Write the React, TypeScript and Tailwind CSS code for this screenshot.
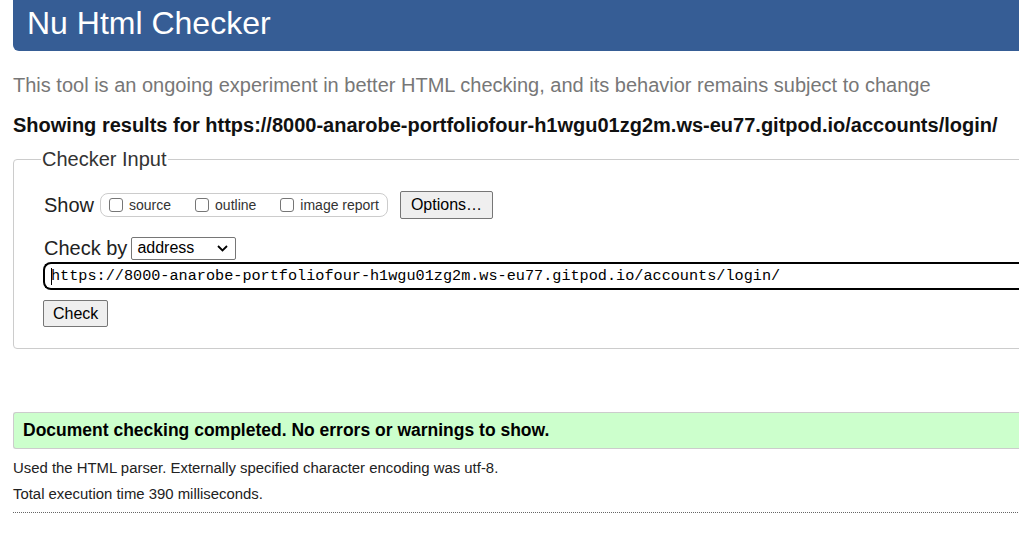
import React from "react";

const url = "https://8000-anarobe-portfoliofour-h1wgu01zg2m.ws-eu77.gitpod.io/accounts/login/";

const Box = ({ label }: { label: string }) => (
    <label className="flex items-center gap-[6px]">
        <span className="inline-block h-[14px] w-[14px] rounded-[3px] border border-[#767676] bg-white" />
        <span className="text-[14px] text-[#333]">{label}</span>
    </label>
);

const App: React.FC = () => {
    return (
        <div className="h-[550px] w-full overflow-hidden bg-white font-['Liberation_Sans',Arial,sans-serif] text-[#222]">
            <div className="w-[1080px] pl-[13px]">
                {/* Title bar */}
                <header className="flex h-[51px] items-end rounded-bl-[6px] bg-[#365d95] pb-[12px] pl-[14px]">
                    <h1 className="text-[32px] leading-none text-white">Nu Html Checker</h1>
                </header>

                <p className="mt-[22px] text-[20px] leading-[24px] text-[#777]">
                    This tool is an ongoing experiment in better HTML checking, and its behavior remains subject to change
                </p>
                <p className="mt-[16px] text-[20px] font-bold leading-[24px] text-[#111]">
                    Showing results for {url}
                </p>

                {/* Checker input */}
                <fieldset className="mt-[11px] rounded-[4px] border border-[#ccc] pb-[21px] pl-[30px]">
                    <legend className="-ml-[3px] px-[1px] text-[20px] leading-[22px] text-[#333]">Checker Input</legend>
                    <div className="mt-[21px] flex h-[28px] items-center">
                        <span className="text-[20px] text-[#222]">Show</span>
                        <div className="ml-[6px] flex h-[24px] items-center gap-[24px] rounded-[8px] border border-[#ccc] pl-[8px] pr-[8px]">
                            <Box label="source" />
                            <Box label="outline" />
                            <Box label="image report" />
                        </div>
                        <button className="ml-[12px] h-[28px] rounded-[2px] border border-[#767676] bg-[#efefef] px-[10px] text-[16px] text-black">
                            Options…
                        </button>
                    </div>
                    <div className="mt-[17px] flex h-[24px] items-center">
                        <span className="text-[20px] text-[#222]">Check by</span>
                        <div className="ml-[4px] flex h-[23px] w-[105px] items-center justify-between rounded-[2px] border border-[#767676] pl-[5px] pr-[7px] text-[16px] text-black">
                            address
                            <svg width="11" height="7" viewBox="0 0 11 7" fill="none" stroke="black" strokeWidth="1.8">
                                <path d="M1 1l4.5 4.5L10 1" />
                            </svg>
                        </div>
                    </div>
                    <div className="mt-[2px] -ml-[1px] flex h-[28px] items-center rounded-l-[8px] border-2 border-r-0 border-black pl-[6px] font-['Liberation_Mono',monospace] text-[15.2px] text-black">
                        <span className="mr-[-1px] inline-block h-[17px] w-[1px] bg-black" />
                        {url}
                    </div>
                    <button className="mt-[10px] -ml-[1px] h-[27px] rounded-[2px] border border-[#767676] bg-[#efefef] px-[9px] text-[16px] text-black">
                        Check
                    </button>
                </fieldset>

                {/* Result */}
                <div className="mt-[63px] flex h-[37px] items-center rounded-l-[3px] border border-r-0 border-[#ccc] bg-[#ccffcc] pl-[9px] text-[17.5px] font-bold text-black">
                    Document checking completed. No errors or warnings to show.
                </div>
                <p className="mt-[10px] text-[14.9px] leading-[18px] text-[#222]">
                    Used the HTML parser. Externally specified character encoding was utf-8.
                </p>
                <p className="mt-[8px] text-[14.9px] leading-[18px] text-[#222]">Total execution time 390 milliseconds.</p>
                <div className="mt-[9px] border-t border-dotted border-[#666]" />
            </div>
        </div>
    );
};

export default App;
